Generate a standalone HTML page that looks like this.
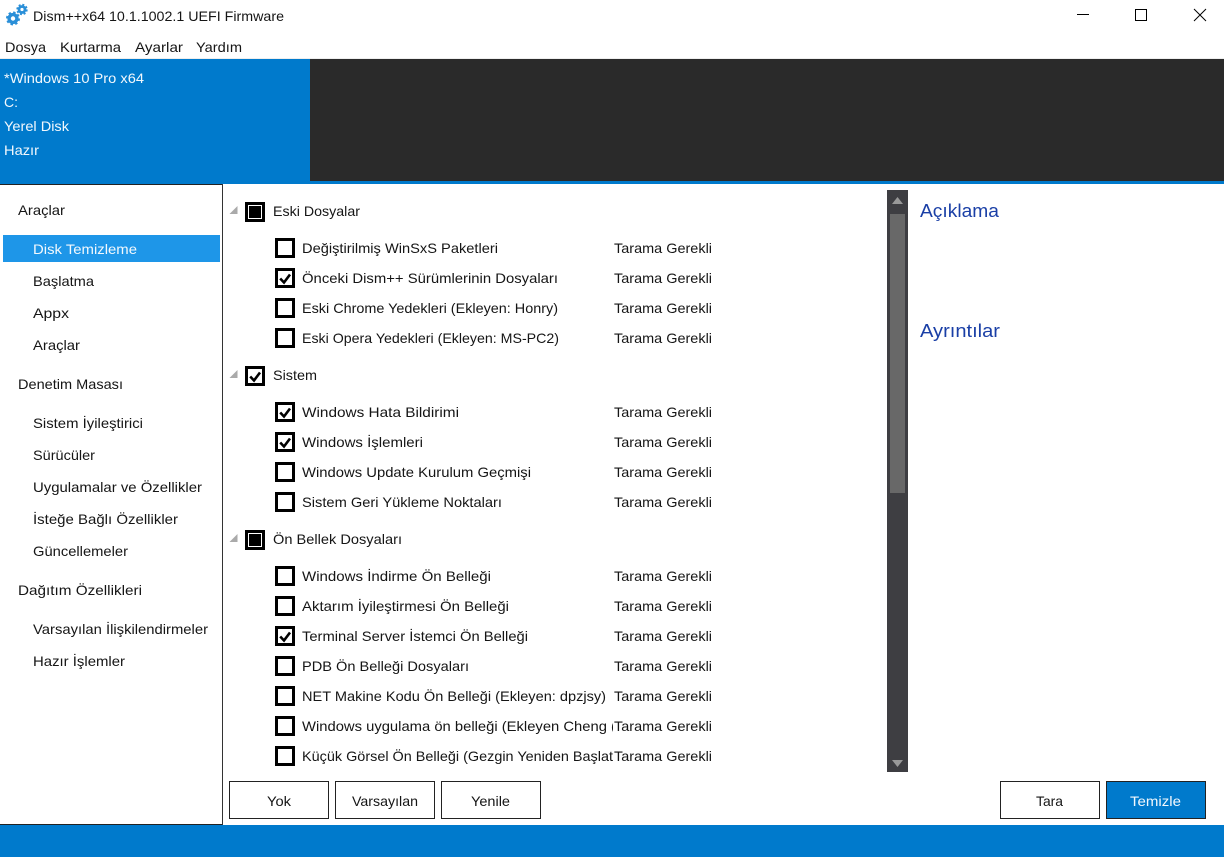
<!DOCTYPE html>
<html lang="tr"><head><meta charset="utf-8"><title>Dism++</title>
<style>
html,body{margin:0;padding:0;background:#fff;width:1224px;height:857px;overflow:hidden}
svg{display:block}
text{font-family:"Liberation Sans",sans-serif;font-size:14px;fill:#151515}
.w text,text.w{fill:#f2f8fd}
text.h{font-size:18px;fill:#1a3fa6}
.b{fill:#fff;stroke:#000;stroke-width:3}
.c{fill:none;stroke:#000;stroke-width:2.6}
.tri{fill:#aaa}
.btn{fill:#fff;stroke:#222;stroke-width:1}
</style></head><body>
<svg width="1224" height="857" viewBox="0 0 1224 857" xmlns="http://www.w3.org/2000/svg">
<defs>
<clipPath id="clip"><rect x="270" y="190" width="343" height="582"/></clipPath>
<g id="box"><rect class="b" x="1.5" y="1.5" width="17" height="17"/></g>
<g id="chk"><rect class="b" x="1.5" y="1.5" width="17" height="17"/><path class="c" d="M5.2 10.5L9 14.5L15 6.5"/></g>
<g id="mix"><rect class="b" x="1.5" y="1.5" width="17" height="17"/><rect x="4" y="4" width="12" height="12" fill="#000"/></g>
<polygon id="tr" class="tri" points="237.5,0 237.5,8 229.5,8"/>
</defs>

<!-- title bar -->
<g>
 <circle cx="13" cy="18.5" r="3.9" fill="none" stroke="#2a8fd8" stroke-width="3.4"/>
 <circle cx="13" cy="18.5" r="6" fill="none" stroke="#2a8fd8" stroke-width="2" stroke-dasharray="2.4 2.3"/>
 <circle cx="22" cy="9.5" r="3" fill="none" stroke="#2a8fd8" stroke-width="2.8"/>
 <circle cx="22" cy="9.5" r="4.8" fill="none" stroke="#2a8fd8" stroke-width="1.8" stroke-dasharray="2 1.8"/>
</g>
<text x="33" y="21" textLength="251" lengthAdjust="spacingAndGlyphs">Dism++x64 10.1.1002.1 UEFI Firmware</text>
<rect x="1077" y="14" width="12" height="1" fill="#000"/>
<rect x="1135.5" y="9.5" width="11" height="11" fill="none" stroke="#000"/>
<path d="M1194 9L1206 21M1206 9L1194 21" stroke="#000" fill="none" stroke-width="1"/>

<!-- menu -->
<text x="5" y="52" textLength="41" lengthAdjust="spacingAndGlyphs">Dosya</text>
<text x="60" y="52" textLength="61" lengthAdjust="spacingAndGlyphs">Kurtarma</text>
<text x="135" y="52" textLength="48" lengthAdjust="spacingAndGlyphs">Ayarlar</text>
<text x="196" y="52" textLength="46" lengthAdjust="spacingAndGlyphs">Yardım</text>
<rect x="0" y="58" width="1224" height="1" fill="#eeeeee"/>

<!-- header -->
<rect x="0" y="59" width="1224" height="125" fill="#007acc"/>
<rect x="310" y="59" width="914" height="122" fill="#2a2a2a"/>
<text class="w" x="4" y="83" textLength="140" lengthAdjust="spacingAndGlyphs">*Windows 10 Pro x64</text>
<text class="w" x="4" y="107">C:</text>
<text class="w" x="4" y="131" textLength="65" lengthAdjust="spacingAndGlyphs">Yerel Disk</text>
<text class="w" x="4" y="155" textLength="35" lengthAdjust="spacingAndGlyphs">Hazır</text>

<!-- sidebar -->
<rect x="0" y="184" width="222" height="1" fill="#222"/>
<rect x="222" y="184" width="1" height="641" fill="#333"/>
<rect x="0" y="824" width="222" height="1" fill="#222"/>
<rect x="3" y="235" width="217" height="27" fill="#1e96e8"/>
<text x="18" y="215" textLength="47" lengthAdjust="spacingAndGlyphs">Araçlar</text>
<text class="w" x="33" y="254" textLength="104" lengthAdjust="spacingAndGlyphs">Disk Temizleme</text>
<text x="33" y="286" textLength="61" lengthAdjust="spacingAndGlyphs">Başlatma</text>
<text x="33" y="318" textLength="36" lengthAdjust="spacingAndGlyphs">Appx</text>
<text x="33" y="350" textLength="47" lengthAdjust="spacingAndGlyphs">Araçlar</text>
<text x="18" y="389" textLength="105" lengthAdjust="spacingAndGlyphs">Denetim Masası</text>
<text x="33" y="428" textLength="110" lengthAdjust="spacingAndGlyphs">Sistem İyileştirici</text>
<text x="33" y="460" textLength="62" lengthAdjust="spacingAndGlyphs">Sürücüler</text>
<text x="33" y="492" textLength="169" lengthAdjust="spacingAndGlyphs">Uygulamalar ve Özellikler</text>
<text x="33" y="524" textLength="145" lengthAdjust="spacingAndGlyphs">İsteğe Bağlı Özellikler</text>
<text x="33" y="556" textLength="95" lengthAdjust="spacingAndGlyphs">Güncellemeler</text>
<text x="18" y="595" textLength="124" lengthAdjust="spacingAndGlyphs">Dağıtım Özellikleri</text>
<text x="33" y="634" textLength="175" lengthAdjust="spacingAndGlyphs">Varsayılan İlişkilendirmeler</text>
<text x="33" y="666" textLength="92" lengthAdjust="spacingAndGlyphs">Hazır İşlemler</text>

<!-- tree groups -->
<use href="#tr" x="0" y="206"/><use href="#mix" x="245" y="202"/>
<text x="273" y="216" textLength="87" lengthAdjust="spacingAndGlyphs">Eski Dosyalar</text>
<use href="#tr" x="0" y="370"/><use href="#chk" x="245" y="366"/>
<text x="273" y="380" textLength="44" lengthAdjust="spacingAndGlyphs">Sistem</text>
<use href="#tr" x="0" y="534"/><use href="#mix" x="245" y="530"/>
<text x="273" y="544" textLength="129" lengthAdjust="spacingAndGlyphs">Ön Bellek Dosyaları</text>

<!-- boxes -->
<use href="#box" x="275" y="238"/><use href="#chk" x="275" y="268"/><use href="#box" x="275" y="298"/><use href="#box" x="275" y="328"/>
<use href="#chk" x="275" y="402"/><use href="#chk" x="275" y="432"/><use href="#box" x="275" y="462"/><use href="#box" x="275" y="492"/>
<use href="#box" x="275" y="566"/><use href="#box" x="275" y="596"/><use href="#chk" x="275" y="626"/><use href="#box" x="275" y="656"/><use href="#box" x="275" y="686"/><use href="#box" x="275" y="716"/><use href="#box" x="275" y="746"/>

<!-- labels -->
<g clip-path="url(#clip)">
<text x="302" y="253" textLength="196" lengthAdjust="spacingAndGlyphs">Değiştirilmiş WinSxS Paketleri</text>
<text x="302" y="283" textLength="256" lengthAdjust="spacingAndGlyphs">Önceki Dism++ Sürümlerinin Dosyaları</text>
<text x="302" y="313" textLength="256" lengthAdjust="spacingAndGlyphs">Eski Chrome Yedekleri (Ekleyen: Honry)</text>
<text x="302" y="343" textLength="257" lengthAdjust="spacingAndGlyphs">Eski Opera Yedekleri (Ekleyen: MS-PC2)</text>
<text x="302" y="417" textLength="157" lengthAdjust="spacingAndGlyphs">Windows Hata Bildirimi</text>
<text x="302" y="447" textLength="121" lengthAdjust="spacingAndGlyphs">Windows İşlemleri</text>
<text x="302" y="477" textLength="229" lengthAdjust="spacingAndGlyphs">Windows Update Kurulum Geçmişi</text>
<text x="302" y="507" textLength="200" lengthAdjust="spacingAndGlyphs">Sistem Geri Yükleme Noktaları</text>
<text x="302" y="581" textLength="189" lengthAdjust="spacingAndGlyphs">Windows İndirme Ön Belleği</text>
<text x="302" y="611" textLength="207" lengthAdjust="spacingAndGlyphs">Aktarım İyileştirmesi Ön Belleği</text>
<text x="302" y="641" textLength="226" lengthAdjust="spacingAndGlyphs">Terminal Server İstemci Ön Belleği</text>
<text x="302" y="671" textLength="167" lengthAdjust="spacingAndGlyphs">PDB Ön Belleği Dosyaları</text>
<text x="302" y="701" textLength="304" lengthAdjust="spacingAndGlyphs">NET Makine Kodu Ön Belleği (Ekleyen: dpzjsy)</text>
<text x="302" y="731" textLength="314" lengthAdjust="spacingAndGlyphs">Windows uygulama ön belleği (Ekleyen Cheng (</text>
<text x="302" y="761" textLength="311" lengthAdjust="spacingAndGlyphs">Küçük Görsel Ön Belleği (Gezgin Yeniden Başlat</text>
</g>
<g>
<text x="614" y="253" textLength="98" lengthAdjust="spacingAndGlyphs">Tarama Gerekli</text>
<text x="614" y="283" textLength="98" lengthAdjust="spacingAndGlyphs">Tarama Gerekli</text>
<text x="614" y="313" textLength="98" lengthAdjust="spacingAndGlyphs">Tarama Gerekli</text>
<text x="614" y="343" textLength="98" lengthAdjust="spacingAndGlyphs">Tarama Gerekli</text>
<text x="614" y="417" textLength="98" lengthAdjust="spacingAndGlyphs">Tarama Gerekli</text>
<text x="614" y="447" textLength="98" lengthAdjust="spacingAndGlyphs">Tarama Gerekli</text>
<text x="614" y="477" textLength="98" lengthAdjust="spacingAndGlyphs">Tarama Gerekli</text>
<text x="614" y="507" textLength="98" lengthAdjust="spacingAndGlyphs">Tarama Gerekli</text>
<text x="614" y="581" textLength="98" lengthAdjust="spacingAndGlyphs">Tarama Gerekli</text>
<text x="614" y="611" textLength="98" lengthAdjust="spacingAndGlyphs">Tarama Gerekli</text>
<text x="614" y="641" textLength="98" lengthAdjust="spacingAndGlyphs">Tarama Gerekli</text>
<text x="614" y="671" textLength="98" lengthAdjust="spacingAndGlyphs">Tarama Gerekli</text>
<text x="614" y="701" textLength="98" lengthAdjust="spacingAndGlyphs">Tarama Gerekli</text>
<text x="614" y="731" textLength="98" lengthAdjust="spacingAndGlyphs">Tarama Gerekli</text>
<text x="614" y="761" textLength="98" lengthAdjust="spacingAndGlyphs">Tarama Gerekli</text>
</g>

<!-- scrollbar -->
<rect x="887" y="190" width="21" height="582" fill="#3e3e42"/>
<rect x="890" y="214" width="15" height="279" fill="#686868"/>
<polygon points="897.5,197 903,204 892,204" fill="#999"/>
<polygon points="892,760 903,760 897.5,767" fill="#999"/>

<!-- right panel -->
<text class="h" x="920" y="217" textLength="79" lengthAdjust="spacingAndGlyphs">Açıklama</text>
<text class="h" x="920" y="337" textLength="80" lengthAdjust="spacingAndGlyphs">Ayrıntılar</text>

<!-- buttons -->
<rect class="btn" x="229.5" y="781.5" width="99" height="37"/>
<rect class="btn" x="335.5" y="781.5" width="99" height="37"/>
<rect class="btn" x="441.5" y="781.5" width="99" height="37"/>
<rect class="btn" x="1000.5" y="781.5" width="99" height="37"/>
<rect class="btn" x="1106.5" y="781.5" width="99" height="37" style="fill:#007acc"/>
<text x="267" y="806" textLength="24" lengthAdjust="spacingAndGlyphs">Yok</text>
<text x="352" y="806" textLength="66" lengthAdjust="spacingAndGlyphs">Varsayılan</text>
<text x="471" y="806" textLength="39" lengthAdjust="spacingAndGlyphs">Yenile</text>
<text x="1036" y="806" textLength="27" lengthAdjust="spacingAndGlyphs">Tara</text>
<text class="w" x="1130" y="806" textLength="51" lengthAdjust="spacingAndGlyphs">Temizle</text>

<!-- status bar -->
<rect x="0" y="825" width="1224" height="32" fill="#007acc"/>
</svg>
</body></html>
